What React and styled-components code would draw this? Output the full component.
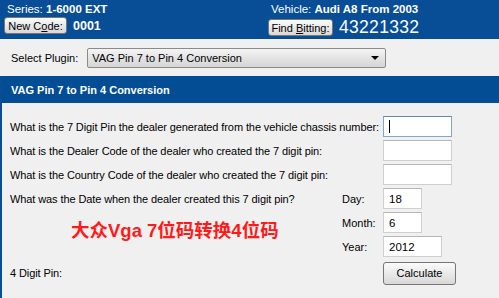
import React from 'react';
import styled, {createGlobalStyle} from 'styled-components';

const Global = createGlobalStyle`
	html, body {
		margin: 0;
		padding: 0;
		background: #f0f0f0;
	}
	body {
		width: 499px;
		height: 298px;
		overflow: hidden;
		font-family: "Liberation Sans", Arial, sans-serif;
		font-size: 11px;
		color: #000;
	}
`;

const Page = styled.div`
	display: flex;
	flex-direction: column;
	width: 499px;
	height: 298px;
`;

const Header = styled.header`
	display: grid;
	grid-template-columns: 264px 1fr;
	height: 39px;
	padding-left: 4px;
	background: #084e97;
	border-bottom: 1px solid #0a4a8a;
	box-sizing: border-box;
	color: #fff;
`;

const HeaderCol = styled.div`
	display: flex;
	flex-direction: column;
`;

const InfoLine = styled.div`
	height: 17px;
	line-height: 19px;
	padding-left: 3px;
	font-size: 11.5px;
	white-space: nowrap;
	b {
		font-weight: bold;
	}
`;

const ButtonLine = styled.div`
	display: flex;
	align-items: center;
	gap: 6px;
`;

const Button = styled.button`
	height: ${p => p.$h || 17}px;
	width: ${p => p.$w}px;
	padding: 0;
	border: 1px solid #767676;
	border-radius: 3px;
	background: linear-gradient(#fbfbfb, #e6e6e6 60%, #d8d8d8);
	font-family: "Liberation Sans", Arial, sans-serif;
	font-size: 11px;
	color: #000;
	white-space: nowrap;
	box-sizing: border-box;
	u {
		text-decoration: underline;
	}
`;

const Code = styled.span`
	font-weight: bold;
	font-size: 12.5px;
`;

const Bitting = styled.span`
	font-size: 17.5px;
	letter-spacing: 0.3px;
`;

const PluginBar = styled.div`
	display: flex;
	align-items: center;
	gap: 9px;
	height: 37px;
	padding-left: 11px;
	font-size: 11px;
`;

const Select = styled.div`
	display: flex;
	align-items: center;
	justify-content: space-between;
	width: 299px;
	height: 20px;
	padding: 0 6px 0 4px;
	border: 1px solid #8a8a8a;
	border-radius: 2px;
	background: linear-gradient(#f4f4f4, #e2e2e2 55%, #d6d6d6);
	box-sizing: border-box;
	font-size: 11px;
`;

const Arrow = styled.span`
	width: 0;
	height: 0;
	border-left: 4px solid transparent;
	border-right: 4px solid transparent;
	border-top: 4px solid #000;
`;

const Frame = styled.section`
	flex: 1;
	display: flex;
	flex-direction: column;
	border-left: 2px solid #084e97;
`;

const TitleBar = styled.div`
	height: 27px;
	line-height: 28px;
	padding-left: 9px;
	background: #034d94;
	color: #fff;
	font-weight: bold;
	font-size: 11px;
`;

const Form = styled.div`
	display: grid;
	grid-template-columns: 332px 41px 1fr;
	grid-auto-rows: 21px;
	row-gap: 3px;
	padding: 13px 0 0 8px;
	font-size: 11px;
	align-items: center;
`;

const Question = styled.div`
	grid-column: ${p => (p.$wide ? '1 / 3' : '1')};
	white-space: nowrap;
	letter-spacing: -0.1px;
	margin-top: ${p => p.$mt || 0}px;
`;

const SmallLabel = styled.div`
	grid-column: 2;
`;

const Input = styled.div`
	grid-column: 3;
	width: ${p => p.$w || 69}px;
	height: ${p => p.$h || 21}px;
	padding: 3px 0 0 5px;
	box-sizing: border-box;
	background: #fff;
	border: 1px solid ${p => (p.$focus ? '#7fa7c9' : '#cfcfcf')};
	border-top-color: ${p => (p.$focus ? '#5f8db5' : '#b5b5b5')};
	font-size: 11.5px;
	line-height: 14px;
`;

const Caret = styled.span`
	display: inline-block;
	width: 1px;
	height: 13px;
	background: #000;
`;

const Banner = styled.div`
	grid-column: 1;
	grid-row: span 2;
	padding-left: 61px;
	margin-bottom: 12px;
	color: #ff1a1a;
	font-family: "Liberation Sans", "Noto Sans CJK SC", sans-serif;
	font-weight: bold;
	font-size: 18.5px;
	align-self: center;
	white-space: nowrap;
`;

const CalcCell = styled.div`
	grid-column: 3;
	margin-top: 5px;
`;

export default function App() {
	return (
		<Page>
			<Global />
			<Header>
				<HeaderCol>
					<InfoLine>
						Series: <b>1-6000 EXT</b>
					</InfoLine>
					<ButtonLine>
						<Button $w={63}>
							New C<u>o</u>de:
						</Button>
						<Code>0001</Code>
					</ButtonLine>
				</HeaderCol>
				<HeaderCol>
					<InfoLine>
						Vehicle: <b>Audi A8 From 2003</b>
					</InfoLine>
					<ButtonLine>
						<Button $w={65}>
							Find <u>B</u>itting:
						</Button>
						<Bitting>43221332</Bitting>
					</ButtonLine>
				</HeaderCol>
			</Header>

			<PluginBar>
				<span>Select Plugin:</span>
				<Select>
					<span>VAG Pin 7 to Pin 4 Conversion</span>
					<Arrow />
				</Select>
			</PluginBar>

			<Frame>
				<TitleBar>VAG Pin 7 to Pin 4 Conversion</TitleBar>
				<Form>
					<Question $wide>What is the 7 Digit Pin the dealer generated from the vehicle chassis number:</Question>
					<Input $focus>
						<Caret />
					</Input>
					<Question $wide>What is the Dealer Code of the dealer who created the 7 digit pin:</Question>
					<Input />
					<Question $wide>What is the Country Code of the dealer who created the 7 digit pin:</Question>
					<Input />

					<Question>What was the Date when the dealer created this 7 digit pin?</Question>
					<SmallLabel>Day:</SmallLabel>
					<Input $w={39}>18</Input>

					<Banner>大众Vga 7位码转换4位码</Banner>
					<SmallLabel>Month:</SmallLabel>
					<Input $w={39}>6</Input>
					<SmallLabel>Year:</SmallLabel>
					<Input $w={59}>2012</Input>

					<Question $mt={4}>4 Digit Pin:</Question>
					<CalcCell>
						<Button $w={73} $h={23}>
							Calculate
						</Button>
					</CalcCell>
				</Form>
			</Frame>
		</Page>
	);
}
